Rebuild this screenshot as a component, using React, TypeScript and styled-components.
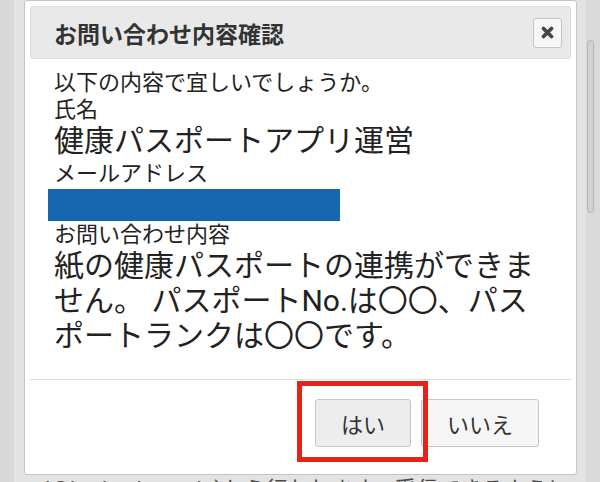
import React from 'react';
import styled, { createGlobalStyle } from 'styled-components';

const GlobalStyle = createGlobalStyle`
  html, body {
    margin: 0;
    padding: 0;
    background: #d9d9d9;
    overflow: hidden;
  }

  body {
    font-family: Roboto, "Noto Sans CJK JP", sans-serif;
  }
`;

const Screen = styled.div`
  position: relative;
  width: 600px;
  height: 482px;
  overflow: hidden;
  display: flex;
  padding-left: 14px;
  box-sizing: border-box;
`;

const PageColumn = styled.div`
  flex: 1;
  background: #e3e3e3;
  display: flex;
  flex-direction: column;
  justify-content: flex-end;
  overflow: hidden;
`;

const UnderText = styled.p`
  margin: 0 0 -21px;
  padding-left: 31px;
  font-size: 22px;
  line-height: 27px;
  color: #4a4a4a;
  white-space: nowrap;
`;

const ScrollTrack = styled.div`
  width: 14px;
  background: #dadada;
`;

const ScrollThumb = styled.div`
  width: 5px;
  height: 171px;
  margin: 40px 0 0 1px;
  border: 1px solid #b4b4b4;
  border-radius: 4px;
  background: #d2d2d2;
`;

const Dialog = styled.div`
  position: absolute;
  left: 24px;
  top: 0;
  width: 553px;
  box-sizing: border-box;
  padding: 5px;
  background: #fff;
  border: 1px solid #c5c5c5;
  border-radius: 3px;
  display: flex;
  flex-direction: column;
`;

const TitleBar = styled.div`
  height: 53px;
  box-sizing: border-box;
  display: flex;
  align-items: center;
  justify-content: space-between;
  padding: 0 8px 0 23px;
  background: #e9e9e9;
  border: 1px solid #dddddd;
  border-radius: 3px;
`;

const Title = styled.span`
  font-size: 23px;
  font-weight: 700;
  color: #333;
`;

const CloseButton = styled.button`
  width: 29px;
  height: 30px;
  padding: 0;
  display: flex;
  align-items: center;
  justify-content: center;
  background: #f6f6f6;
  border: 1px solid #c5c5c5;
  border-radius: 3px;
`;

const Content = styled.div`
  padding: 10px 24px 26px;
  color: #222;
`;

const Label = styled.div<{ $gap?: number }>`
  font-size: 22px;
  line-height: 27px;
  margin-top: ${(p) => p.$gap ?? 0}px;
`;

const Value = styled.div`
  font-size: 30px;
  line-height: 35px;
`;

const Redacted = styled.div`
  width: 292px;
  height: 32px;
  margin: 2px 0 0 -6px;
  background: #1666ae;
`;

const ButtonPane = styled.div`
  display: flex;
  justify-content: flex-end;
  gap: 10px;
  padding: 19px 32px 22px 0;
  border-top: 1px solid #dddddd;
`;

const Highlight = styled.div`
  position: relative;

  &::after {
    content: '';
    position: absolute;
    top: -18px;
    left: -18px;
    right: -17px;
    bottom: -15px;
    border: 5px solid #e3241b;
    pointer-events: none;
  }
`;

const DialogButton = styled.button<{ $active?: boolean }>`
  height: 48px;
  padding: 0 25px;
  font-family: inherit;
  font-size: 22px;
  color: #333;
  background: ${(p) => (p.$active ? '#ededed' : '#f6f6f6')};
  border: 1px solid #c5c5c5;
  border-radius: 3px;
`;

const CloseIcon = () => (
  <svg width="15" height="15" viewBox="0 0 15 15">
    <path d="M3.5 3.5 L11.5 11.5 M11.5 3.5 L3.5 11.5" stroke="#454545" strokeWidth="3.8" strokeLinecap="round" />
  </svg>
);

const App = () => {
  return (
    <>
      <GlobalStyle />
      <Screen>
        <PageColumn>
          <UnderText>l@hotkachu.co.jp)から行われます。受信できるように</UnderText>
        </PageColumn>
        <ScrollTrack>
          <ScrollThumb />
        </ScrollTrack>

        <Dialog>
          <TitleBar>
            <Title>お問い合わせ内容確認</Title>
            <CloseButton aria-label="close">
              <CloseIcon />
            </CloseButton>
          </TitleBar>
          <Content>
            <Label>以下の内容で宜しいでしょうか。</Label>
            <Label>氏名</Label>
            <Value>健康パスポートアプリ運営</Value>
            <Label $gap={2}>メールアドレス</Label>
            <Redacted />
            <Label>お問い合わせ内容</Label>
            <Value>
              紙の健康パスポートの連携ができません。 パスポートNo.は〇〇、パスポートランクは〇〇です。
            </Value>
          </Content>
          <ButtonPane>
            <Highlight>
              <DialogButton $active>はい</DialogButton>
            </Highlight>
            <DialogButton>いいえ</DialogButton>
          </ButtonPane>
        </Dialog>
      </Screen>
    </>
  );
};

export default App;
